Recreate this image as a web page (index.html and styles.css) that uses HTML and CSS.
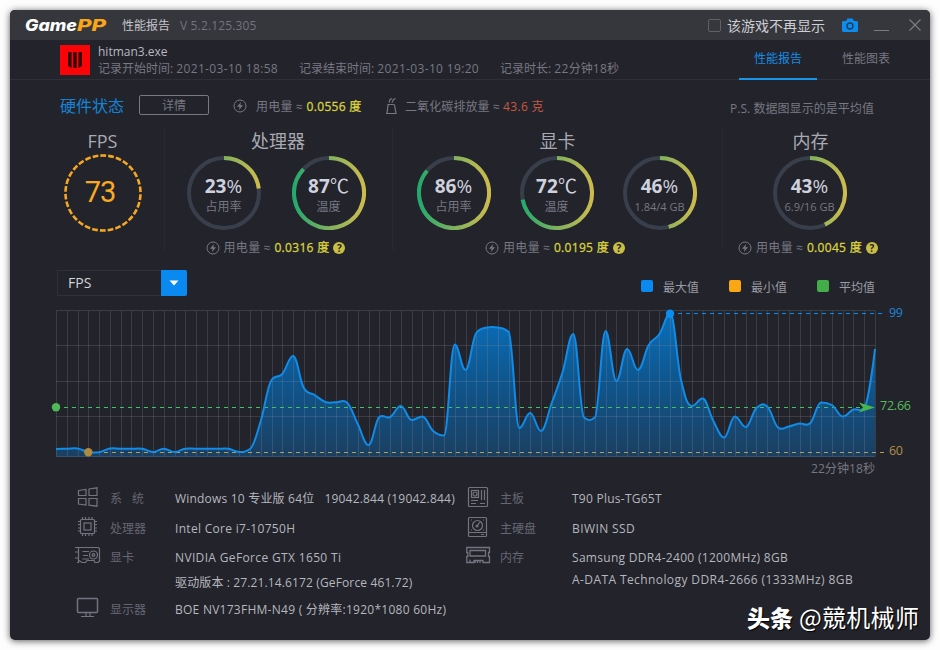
FILE: index.html
```html
<!DOCTYPE html>
<html lang="zh-CN">
<head>
<meta charset="utf-8">
<title>GamePP 性能报告</title>
<link rel="stylesheet" href="styles.css">
</head>
<body>
<svg class="defs" width="0" height="0">
  <defs>
    <linearGradient id="ring" gradientUnits="userSpaceOnUse" x1="2" y1="0" x2="72" y2="0"><stop offset="0" stop-color="#22aa6c"/><stop offset=".5" stop-color="#7fb25d"/><stop offset="1" stop-color="#cdbb4c"/></linearGradient>
    <symbol id="bolt" viewBox="0 0 14 14"><circle cx="7" cy="7" r="6" fill="none" stroke="#777881" stroke-width="1"/><path d="M8 3 4 7.7h2.6L6 11l4-4.7H7.4z" fill="#777881"/></symbol>
  </defs>
</svg>
<div class="window">
  <header class="titlebar">
    <svg class="logo" width="84" height="18"><text x="0" y="15" textLength="52" lengthAdjust="spacingAndGlyphs">Game</text><text class="pp" x="52" y="15" textLength="29" lengthAdjust="spacingAndGlyphs">PP</text></svg>
    <span class="app-title">性能报告</span>
    <span class="version">V 5.2.125.305</span>
    <span class="checkbox"></span>
    <span class="no-show">该游戏不再显示</span>
    <svg class="camera" width="16" height="14"><path d="M1 3h3l1.500-2.500h5L12 3h3l1 1v9l-1 1H1l-1-1V4z" fill="#0b8df0"/><circle cx="8" cy="8" r="3" fill="none" stroke="#263b52" stroke-width="1.400"/></svg>
    <span class="minimize"></span>
    <svg class="close" width="14" height="14"><path d="M1.500 1.500l11 11M12.500 1.500l-11 11" stroke="#7b7c83" stroke-width="1.200"/></svg>
  </header>

  <section class="game">
    <svg class="game-icon" width="30" height="30"><path d="M0 0h30v30H0z" fill="#fb0408"/><path d="M8 7h3.500v16L8 21zM13.200 7h3.500v16h-3.500zM18.500 7H22v14l-3.500 2z" fill="#350207"/></svg>
    <div class="game-info">
      <div class="exe">hitman3.exe</div>
      <div class="times"><span class="t1">记录开始时间: <b>2021-03-10 18:58</b></span><span class="t2">记录结束时间: <b>2021-03-10 19:20</b></span><span>记录时长: <b>22</b>分钟<b>18</b>秒</span></div>
    </div>
    <nav><span class="tab active">性能报告</span><span class="tab">性能图表</span></nav>
  </section>

  <section class="status">
    <h1>硬件状态</h1>
    <span class="detail">详情</span>
    <svg class="bolt" width="14" height="14"><use href="#bolt"/></svg>
    <span class="power-total">用电量 ≈ <b class="yellow">0.0556 度</b></span>
    <svg class="flask" width="12" height="18" fill="none" stroke="#777881"><path d="M2.500 7.500h7M3 8l-1 8.500h9L9.500 8M1 16.500h10M4 5.500l1-3 2-1M7 5.500l1.500-3 2-1" stroke-width="1.200"/></svg>
    <span class="co2">二氧化碳排放量 ≈ <b class="red">43.6 克</b></span>
    <span class="ps">P.S. 数据图显示的是平均值</span>
  </section>

  <section class="gauges">
    <div class="group g-fps">
      <h2>FPS</h2>
      <div class="gauge fps"><svg width="80" height="80"><circle cx="40" cy="40" r="37.500" fill="none" stroke="#f5a623" stroke-width="2.600" pathLength="300" stroke-dasharray="7.300 2.700" transform="rotate(-94 40 40)"/></svg><div class="inner"><span class="digits">73</span></div></div>
    </div>
    <div class="group g-cpu">
      <h2>处理器</h2>
      <div class="rings" id="cpu"></div>
      <div class="power"><svg width="14" height="14"><use href="#bolt"/></svg><span>用电量 ≈ <b class="yellow">0.0316 度</b></span><i>?</i></div>
    </div>
    <div class="group g-gpu">
      <h2>显卡</h2>
      <div class="rings" id="gpu"></div>
      <div class="power"><svg width="14" height="14"><use href="#bolt"/></svg><span>用电量 ≈ <b class="yellow">0.0195 度</b></span><i>?</i></div>
    </div>
    <div class="group g-ram">
      <h2>内存</h2>
      <div class="rings" id="ram"></div>
      <div class="power"><svg width="14" height="14"><use href="#bolt"/></svg><span>用电量 ≈ <b class="yellow">0.0045 度</b></span><i>?</i></div>
    </div>
  </section>

  <section class="controls">
    <div class="select"><span>FPS</span><div class="arrow"><svg width="10" height="6"><path d="M.5.500h9L5 5.500z" fill="#fff"/></svg></div></div>
    <div class="legend"><span><i class="max"></i>最大值</span><span><i class="min"></i>最小值</span><span><i class="avg"></i>平均值</span></div>
  </section>

  <svg class="chart" width="920" height="182" viewBox="10 300 920 182">
    <defs><linearGradient id="area" gradientUnits="userSpaceOnUse" x1="0" y1="313" x2="0" y2="457"><stop offset="0" stop-color="#0a6fba"/><stop offset=".45" stop-color="#0e5790"/><stop offset="1" stop-color="#1b3f61"/></linearGradient></defs>
    <path id="fill" fill="url(#area)"/>
    <path id="grid" stroke="#8d90a0" stroke-opacity=".24" fill="none"/>
    <path d="M670 313.500h215" stroke="#0a8cf0" stroke-width="1.200" stroke-dasharray="4 4"/>
    <path d="M56 407.500h808" stroke="#3fc45c" stroke-width="1.200" stroke-dasharray="4 4"/>
    <path d="M88 452.500h797" stroke="#b3a04e" stroke-width="1.100" stroke-dasharray="4 4"/>
    <path id="line" fill="none" stroke="#118be6" stroke-width="2" stroke-linejoin="round"/>
    <circle cx="56" cy="407.300" r="4.200" fill="#4fb857"/><circle cx="88.300" cy="452.300" r="4.200" fill="#b08a3e"/><circle cx="670" cy="313.800" r="4.200" fill="#0b8df0"/>
    <path d="M859 402.500l16 5-16 5 4-5z" fill="#45b64d"/>
    <text x="889" y="317" textLength="14" fill="#1c86d8">99</text>
    <text x="880" y="410" textLength="31" fill="#55bd5c">72.66</text>
    <text x="889" y="455" textLength="14" fill="#b18e48">60</text>
    <text x="811" y="473" textLength="64" lengthAdjust="spacingAndGlyphs" fill="#777881">22分钟18秒</text>
  </svg>

  <section class="specs">
    <div class="col left">
      <div class="row"><svg class="ico" width="28" height="26"><path d="M3.500 6.500l7.500-1v6H3.500zM14 5l8-1.200v7.700h-8zM3.500 14.500H11v6.500l-7.500-1zM14 14.500h8v7.700l-8-1z"/></svg><span class="label wide">系<em></em>统</span><span class="val v1">Windows 10 专业版 64位&nbsp;&nbsp; 19042.844 (19042.844)</span></div>
      <div class="row"><svg class="ico" width="28" height="26"><rect x="5.500" y="5.500" width="14" height="14" rx="1"/><rect x="9" y="9" width="7" height="7"/><path d="M7.500 3v2.500M10.500 3v2.500M14 3v2.500M17 3v2.500M7.500 19.500V22M10.500 19.500V22M14 19.500V22M17 19.500V22M3 7.500h2.500M3 10.500h2.500M3 14h2.500M3 17h2.500M19.500 7.500H22M19.500 10.500H22M19.500 14H22M19.500 17H22"/></svg><span class="label">处理器</span><span class="val v2">Intel Core i7-10750H</span></div>
      <div class="row"><svg class="ico" width="28" height="26"><path d="M0 4.500h3.500v15H2M0 9h3M0 15h3M3.500 4.500h20l1 1.500v12l-1.500 1.500h-3l-1-2h-7l-1.500 2H7l-3-2M7.500 8.500H14M8 12.500h5M7.500 16H14"/><circle cx="18.500" cy="12" r="4"/><circle cx="18.500" cy="12" r="1.300"/></svg><span class="label">显卡</span><span class="val v3">NVIDIA GeForce GTX 1650 Ti</span></div>
      <div class="row sub"><span class="val v4">驱动版本 : 27.21.14.6172 (GeForce 461.72)</span></div>
      <div class="row"><svg class="ico" width="28" height="26"><rect x="2.500" y="3.500" width="20" height="14" rx="1" stroke-width="1.500"/><path d="M11 18v3M15 18v3M6 21.500h13"/></svg><span class="label">显示器</span><span class="val v5">BOE NV173FHM-N49 ( 分辨率:1920*1080 60Hz)</span></div>
    </div>
    <div class="col right">
      <div class="row"><svg class="ico" width="28" height="26"><rect x="3.500" y="3.500" width="19" height="19" rx="1"/><rect x="6.500" y="6.500" width="7" height="7"/><circle cx="10" cy="10" r="2"/><path d="M16.500 6v10M19.500 6v10M6 16.500h7M6 19.500h5M15 19.500h5"/></svg><span class="label">主板</span><span class="val r1">T90 Plus-TG65T</span></div>
      <div class="row"><svg class="ico" width="28" height="26"><rect x="3.500" y="3.500" width="18" height="19" rx="1"/><path d="M4 18.500h17M15 8l-3 4M6 6h1M18 6h1M6 16h1M18 16h1M16 20.500h3"/><circle cx="12.500" cy="11.500" r="5"/><circle cx="12" cy="12" r="1"/></svg><span class="label">主硬盘</span><span class="val r2">BIWIN SSD</span></div>
      <div class="row"><svg class="ico" width="28" height="26"><path d="M1.800 4.500h22.700v5h-1v4h1v6H18v-2H9v2H1.800v-6h1v-4h-1zM5 7.500h15.500v5.500H5zM10 17v3M12.500 17v3M15 17v3M5 16.500v3" stroke-width="1.300"/></svg><span class="label">内存</span><span class="val r3">Samsung DDR4-2400 (1200MHz) 8GB</span></div>
      <div class="row sub2"><span class="val r4">A-DATA Technology DDR4-2666 (1333MHz) 8GB</span></div>
    </div>
  </section>
  <div class="watermark"><b>头条</b> <span>@競机械师</span></div>
</div>
<script src="app.js"></script>
</body>
</html>
```

FILE: styles.css
```css
* { box-sizing: border-box; }
body { margin: 0; background: #fdfdfd; font: 12px/16px "Open Sans", "Noto Sans CJK SC", sans-serif; color: #777881; overflow: hidden; white-space: nowrap; }
b, i, em { font-style: normal; font-weight: inherit; }
h1, h2 { margin: 0; font-weight: 400; }
svg { display: block; flex: none; }
.defs { position: absolute; }
.window { position: relative; width: 920px; height: 630px; margin: 10px; background: #22232b; border-radius: 5px; overflow: hidden; box-shadow: 0 1px 7px rgba(0,0,0,.65); }
.titlebar { height: 30px; background: #36373c; display: flex; align-items: center; padding-left: 15px; }
.logo text { font: italic 800 16px "Inter", "DejaVu Sans", sans-serif; fill: #fff; }
.logo .pp { fill: #f9a61a; }
.app-title { margin-left: 13px; width: 58px; color: #c3c4ca; padding-top: 1px; }
.version { color: #73747c; width: 528px; letter-spacing: .15px; padding-top: 1px; }
.checkbox { width: 13px; height: 13px; border: 1px solid #606168; border-radius: 2px; }
.no-show { margin-left: 6px; width: 115px; font-size: 14px; color: #cdced4; padding-top: 1px; }
.minimize { width: 15px; height: 1px; background: #7b7c83; margin: 11px 0 0 16px; }
.close { margin-left: 19px; }
.game { height: 40px; border-bottom: 1px solid #2e2f37; display: flex; padding: 5px 0 0 50px; }
.game-info { margin-left: 8px; width: 641px; }
.exe { color: #b9bac0; line-height: 14px; }
.times { display: flex; margin-top: 1px; line-height: 18px; }
.times b { letter-spacing: .34px; }
.times .t1 { width: 201px; }
.times .t2 { width: 201px; }
nav { display: flex; margin-top: -5px; }
.tab { width: 78px; margin-right: 10px; height: 40px; line-height: 38px; text-align: center; }
.active { color: #168ce4; border-bottom: 2px solid #1796ea; }
.status { height: 48px; padding: 3px 0 0 50px; display: flex; align-items: center; }
.status h1 { font-size: 16px; color: #1583d5; width: 79px; }
.detail { width: 70px; height: 20px; border: 1px solid #777881; border-radius: 2px; text-align: center; line-height: 19px; margin: 0 24px 2px 0; }
.bolt { margin-right: 9px; }
.power-total { width: 129px; letter-spacing: .25px; padding-top: 2px; }
.flask { margin-right: 8px; }
.co2 { width: 325px; letter-spacing: .1px; padding-top: 2px; }
.ps { padding-top: 6px; letter-spacing: .05px; }
.yellow { color: #d9d03c; letter-spacing: .3px; -webkit-text-stroke: .3px #d9d03c; }
.red { color: #c75a41; letter-spacing: .3px; }
.gauges { height: 140px; display: flex; }
.group { border-right: 1px solid #292a32; height: 122px; display: flex; flex-direction: column; align-items: center; }
.group h2 { font-size: 18px; line-height: 26px; color: #a9aab1; height: 27px; }
.g-fps { width: 155px; padding-left: 31px; }
.g-fps h2 { height: 25px; font-size: 18px; }
.g-cpu { width: 228px; padding-right: 1px; }
.g-gpu { width: 330px; }
.g-ram { width: 175px; border: 0; }
.gauge { position: relative; width: 74px; height: 74px; }
.gauge.fps { width: 80px; height: 80px; }
.inner { position: absolute; inset: 0; display: flex; flex-direction: column; align-items: center; }
.digits { font: 29px/79px "Roboto", sans-serif; color: #fbab22; letter-spacing: -1px; margin-right: 5px; }
.rings { display: flex; height: 74px; margin: 2px 2px 0 0; }
#cpu { gap: 31px; margin-right: 4px; }
#gpu { gap: 29px; }
.num { font-size: 19px; line-height: 22px; margin-top: 19px; color: #cfd2de; letter-spacing: .1px; }
.num b { font-weight: 700; }
.sub-label { font-size: 12px; line-height: 16px; margin-top: 2px; }
.sub-label.gb { font-size: 11px; }
.power { display: flex; align-items: center; height: 16px; margin: 10px 5px 0 0; }
.power span { margin: 0 4px; letter-spacing: .3px; }
.power i { width: 12px; height: 12px; border-radius: 50%; background: #c9be43; color: #22232b; font: 700 10px/12px "Open Sans", sans-serif; text-align: center; }
.controls { height: 32px; display: flex; align-items: flex-start; padding: 2px 54px 0 47px; justify-content: space-between; }
.select { width: 130px; height: 26px; border: 1px solid #2f3038; display: flex; justify-content: space-between; }
.select span { color: #d4d5d9; font-size: 14px; line-height: 24px; margin-left: 10px; }
.arrow { width: 26px; height: 26px; margin: -1px -1px 0 0; background: #0a8af0; border-radius: 0 2px 2px 0; display: flex; align-items: center; justify-content: center; }
.legend { display: flex; gap: 30px; padding-top: 10px; margin-right: 1px; color: #9b9ca3; }
.legend span { display: flex; gap: 10px; line-height: 16px; }
.legend i { width: 12px; height: 12px; border-radius: 2px; }
.max { background: #0a8af0; } .min { background: #fba714; } .avg { background: #43ad49; }
.chart text { font: 12.500px "Open Sans", "Noto Sans CJK SC", sans-serif; }
.specs { display: flex; padding: 2px 0 0 65px; }
.col { width: 390px; }
.row { height: 30px; display: flex; align-items: center; }
.row .ico { fill: none; stroke: #73747f; stroke-width: 1.200; width: 28px; margin-top: -4px; }
.label { width: 65px; margin-left: 7px; color: #666772; }
.label em { display: inline-block; width: 10px; }
.right .label { width: 72px; margin-left: 7px; }
.left .row:nth-child(3), .right .row:nth-child(3) { height: 28px; }
.val { color: #b6b7bd; }
.v1 { letter-spacing: .2px; } .v2 { letter-spacing: .3px; } .v3 { letter-spacing: .35px; } .v4 { letter-spacing: .13px; } .v5 { letter-spacing: .26px; }
.r1 { letter-spacing: .25px; } .r2 { letter-spacing: .4px; } .r3 { letter-spacing: .3px; } .r4 { letter-spacing: .41px; }
.row.sub { height: 22px; padding-left: 100px; }
.left .row:nth-child(5) { height: 32px; }
.row.sub2 { height: 16px; padding-left: 107px; }
.watermark { position: absolute; left: 737px; top: 591px; color: #fff; font: 24px/32px "Noto Sans CJK SC", sans-serif; text-shadow: 1px 1px 1px #000; display: flex; gap: 6px; }
.watermark b { font-weight: 900; font-size: 23px; }
.watermark span { letter-spacing: .3px; }
```

FILE: app.js
```js
// Ring gauges: [percent, unit, caption]
const rings = {
  cpu: [[23, '%', '占用率'], [87, '℃', '温度']],
  gpu: [[86, '%', '占用率'], [72, '℃', '温度'], [46, '%', '1.84/4 GB']],
  ram: [[43, '%', '6.9/16 GB']]
};
for (const [id, list] of Object.entries(rings)) {
  document.getElementById(id).innerHTML = list.map(([p, unit, caption]) => {
    const a = p / 100 * 2 * Math.PI;
    const x = 37 + 35 * Math.sin(a), y = 37 - 35 * Math.cos(a);
    return `<div class="gauge"><svg width="74" height="74" fill="none" stroke-width="4"><circle cx="37" cy="37" r="35" stroke="#383f4b"/><path d="M37 2A35 35 0 ${p > 50 ? 1 : 0} 1 ${x} ${y}" stroke="url(#ring)"/></svg><div class="inner"><div class="num"><b>${p}</b>${unit}</div><div class="sub-label${caption.includes('GB') ? ' gb' : ''}">${caption}</div></div></div>`;
  }).join('');
}

// FPS curve
const ys = [449, 448.7, 448.5, 452, 452.3, 448.5, 448.8, 448.8, 448.8, 452, 448.7, 452, 448.7, 448.8, 448.8, 448.8, 448.8, 452, 449, 421, 380, 374, 356, 388, 395, 402, 402.3, 402.5, 424, 445, 417, 417, 406, 420, 416.5, 431, 435.5, 344.5, 370, 333, 327.500, 327.5, 332, 428, 413, 431, 403, 372.5, 334, 417.5, 417.5, 331, 381, 349, 370, 345, 334, 313.5, 380, 406, 398.6, 421, 437.5, 416.5, 427, 408, 406.5, 427.5, 426.5, 423.6, 423, 402.5, 405, 416.5, 409.5, 408, 349];
const step = 819 / (ys.length - 1);
const pts = ys.map((y, i) => ({ x: 56 + i * step, y }));
// How far a control point may pass its neighbour; near-flat pairs bulge a little
const slack = (a, b) => Math.abs(a - b) < 2 ? 3.5 : 0;
let d = `M${pts[0].x} ${pts[0].y}`;
let rx = pts[0].x, ry = pts[0].y;
for (let i = 1; i < pts.length; i++) {
  const p = pts[i], l = pts[i - 1], n = pts[i + 1];
  let lx = p.x, ly = p.y, nx = p.x, ny = p.y;
  if (n) {
    lx = (1.5 * p.x + l.x) / 2.5;
    nx = (1.5 * p.x + n.x) / 2.5;
    const half = (n.y - l.y) * 0.2;
    ly = p.y - half; ny = p.y + half;
    const sl = slack(l.y, p.y), sn = slack(n.y, p.y);
    const lmax = Math.max(l.y, p.y) + sl, lmin = Math.min(l.y, p.y) - sl;
    if (ly > lmax) { ly = lmax; ny = 2 * p.y - ly; }
    else if (ly < lmin) { ly = lmin; ny = 2 * p.y - ly; }
    const nmax = Math.max(n.y, p.y) + sn, nmin = Math.min(n.y, p.y) - sn;
    if (ny > nmax) { ny = nmax; ly = 2 * p.y - ny; }
    else if (ny < nmin) { ny = nmin; ly = 2 * p.y - ny; }
  }
  d += `C${rx} ${ry} ${lx} ${ly} ${p.x} ${p.y}`;
  rx = nx; ry = ny;
}
document.getElementById('line').setAttribute('d', d);
document.getElementById('fill').setAttribute('d', d + 'V457H56Z');
let g = '';
for (const y of [310.5, 345.5, 381.5, 416.5, 456.5]) g += `M56 ${y}H875.5`;
for (const p of pts) g += `M${Math.round(p.x) + 0.5} 311V456`;
document.getElementById('grid').setAttribute('d', g);
```
